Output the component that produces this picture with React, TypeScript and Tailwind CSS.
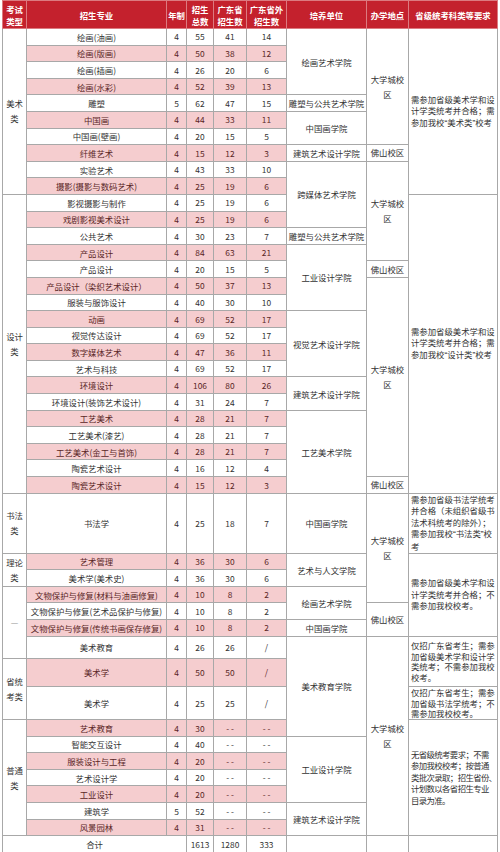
interface Span {
  lines: string[];
  span: number;
}

interface Row {
  major: string;
  years: string;
  total: string;
  gd: string;
  out: string;
  h?: string;
  cat?: Span;
  unit?: Span;
  loc?: Span;
  req?: Span;
  reqClass?: string;
}

const UCITY = ["大学城校", "区"];
const FOSHAN = ["佛山校区"];
const DASH = "- -";

const rows: Row[] = [
  {
    major: "绘画(油画)", years: "4", total: "55", gd: "41", out: "14",
    cat: { lines: ["美术", "类"], span: 10 },
    unit: { lines: ["绘画艺术学院"], span: 4 },
    loc: { lines: UCITY, span: 7 },
    req: { lines: ["需参加省级美术学和设", "计学类统考并合格；需", "参加我校“美术类”校考"], span: 10 },
  },
  { major: "绘画(版画)", years: "4", total: "50", gd: "38", out: "12" },
  { major: "绘画(插画)", years: "4", total: "26", gd: "20", out: "6" },
  { major: "绘画(水彩)", years: "4", total: "52", gd: "39", out: "13" },
  { major: "雕塑", years: "5", total: "62", gd: "47", out: "15", unit: { lines: ["雕塑与公共艺术学院"], span: 1 } },
  { major: "中国画", years: "4", total: "44", gd: "33", out: "11", unit: { lines: ["中国画学院"], span: 2 } },
  { major: "中国画(壁画)", years: "4", total: "20", gd: "15", out: "5" },
  {
    major: "纤维艺术", years: "4", total: "15", gd: "12", out: "3",
    unit: { lines: ["建筑艺术设计学院"], span: 1 },
    loc: { lines: FOSHAN, span: 1 },
  },
  {
    major: "实验艺术", years: "4", total: "43", gd: "33", out: "10",
    unit: { lines: ["跨媒体艺术学院"], span: 4 },
    loc: { lines: UCITY, span: 6 },
  },
  { major: "摄影(摄影与数码艺术)", years: "4", total: "25", gd: "19", out: "6" },
  {
    major: "影视摄影与制作", years: "4", total: "25", gd: "19", out: "6",
    cat: { lines: ["设计", "类"], span: 18 },
    req: { lines: ["需参加省级美术学和设", "计学类统考并合格；需", "参加我校“设计类”校考"], span: 18 },
  },
  { major: "戏剧影视美术设计", years: "4", total: "25", gd: "19", out: "6" },
  { major: "公共艺术", years: "4", total: "30", gd: "23", out: "7", unit: { lines: ["雕塑与公共艺术学院"], span: 1 } },
  { major: "产品设计", years: "4", total: "84", gd: "63", out: "21", unit: { lines: ["工业设计学院"], span: 4 } },
  { major: "产品设计", years: "4", total: "20", gd: "15", out: "5", loc: { lines: FOSHAN, span: 1 } },
  { major: "产品设计（染织艺术设计）", years: "4", total: "50", gd: "37", out: "13", loc: { lines: UCITY, span: 12 } },
  { major: "服装与服饰设计", years: "4", total: "40", gd: "30", out: "10" },
  { major: "动画", years: "4", total: "69", gd: "52", out: "17", unit: { lines: ["视觉艺术设计学院"], span: 4 } },
  { major: "视觉传达设计", years: "4", total: "69", gd: "52", out: "17" },
  { major: "数字媒体艺术", years: "4", total: "47", gd: "36", out: "11" },
  { major: "艺术与科技", years: "4", total: "69", gd: "52", out: "17" },
  { major: "环境设计", years: "4", total: "106", gd: "80", out: "26", unit: { lines: ["建筑艺术设计学院"], span: 2 } },
  { major: "环境设计(装饰艺术设计)", years: "4", total: "31", gd: "24", out: "7" },
  { major: "工艺美术", years: "4", total: "28", gd: "21", out: "7", unit: { lines: ["工艺美术学院"], span: 5 } },
  { major: "工艺美术(漆艺)", years: "4", total: "28", gd: "21", out: "7" },
  { major: "工艺美术(金工与首饰)", years: "4", total: "28", gd: "21", out: "7" },
  { major: "陶瓷艺术设计", years: "4", total: "16", gd: "12", out: "4" },
  { major: "陶瓷艺术设计", years: "4", total: "15", gd: "12", out: "3", loc: { lines: FOSHAN, span: 1 } },
  {
    major: "书法学", years: "4", total: "25", gd: "18", out: "7", h: "h-[59px]",
    cat: { lines: ["书法", "类"], span: 1 },
    unit: { lines: ["中国画学院"], span: 1 },
    loc: { lines: UCITY, span: 4 },
    req: {
      lines: ["需参加省级书法学统考", "并合格（未组织省级书", "法术科统考的除外）；", "需参加我校“书法类”校", "考"],
      span: 1,
    },
  },
  {
    major: "艺术管理", years: "4", total: "36", gd: "30", out: "6",
    cat: { lines: ["理论", "类"], span: 2 },
    unit: { lines: ["艺术与人文学院"], span: 2 },
    req: { lines: ["需参加省级美术学和设", "计学类统考并合格；不", "需参加我校校考。"], span: 5 },
  },
  { major: "美术学(美术史)", years: "4", total: "36", gd: "30", out: "6" },
  {
    major: "文物保护与修复(材料与油画修复)", years: "4", total: "10", gd: "8", out: "2",
    cat: { lines: ["—"], span: 4 },
    unit: { lines: ["绘画艺术学院"], span: 2 },
  },
  { major: "文物保护与修复(艺术品保护与修复)", years: "4", total: "10", gd: "8", out: "2", loc: { lines: FOSHAN, span: 2 } },
  { major: "文物保护与修复(传统书画保存修复)", years: "4", total: "10", gd: "8", out: "2", unit: { lines: ["中国画学院"], span: 1 } },
  {
    major: "美术教育", years: "4", total: "26", gd: "26", out: "/", h: "h-[22.5px]",
    unit: { lines: ["美术教育学院"], span: 4 },
    loc: { lines: UCITY, span: 10 },
    req: { lines: ["仅招广东省考生；需参", "加省级美术学和设计学", "类统考；不需参加我校", "校考。"], span: 2 },
    reqClass: "leading-[10.5px]",
  },
  {
    major: "美术学", years: "4", total: "50", gd: "50", out: "/", h: "h-[27.5px]",
    cat: { lines: ["省统", "考类"], span: 2 },
  },
  {
    major: "美术学", years: "4", total: "25", gd: "25", out: "/", h: "h-[33.5px]",
    req: { lines: ["仅招广东省考生；需参", "加省级书法学统考；不", "需参加我校校考。"], span: 1 },
    reqClass: "leading-[10.5px]",
  },
  {
    major: "艺术教育", years: "4", total: "30", gd: DASH, out: DASH,
    cat: { lines: ["普通", "类"], span: 7 },
    req: {
      lines: ["无省级统考要求；不需", "参加我校校考；按普通", "类批次录取；招生省份、", "计划数以各省招生专业", "目录为准。"],
      span: 7,
    },
    reqClass: "leading-[11.6px] tracking-[-0.6px]",
  },
  { major: "智能交互设计", years: "4", total: "40", gd: DASH, out: DASH, unit: { lines: ["工业设计学院"], span: 4 } },
  { major: "服装设计与工程", years: "4", total: "20", gd: DASH, out: DASH },
  { major: "艺术设计学", years: "4", total: "20", gd: DASH, out: DASH },
  { major: "工业设计", years: "4", total: "20", gd: DASH, out: DASH },
  { major: "建筑学", years: "5", total: "52", gd: DASH, out: DASH, unit: { lines: ["建筑艺术设计学院"], span: 2 } },
  { major: "风景园林", years: "4", total: "31", gd: DASH, out: DASH },
];

const headers: string[][] = [
  ["考试", "类型"],
  ["招生专业"],
  ["年制"],
  ["招生", "总数"],
  ["广东省", "招生数"],
  ["广东省外", "招生数"],
  ["培养单位"],
  ["办学地点"],
  ["省级统考科类等要求"],
];

const cell = "border border-[#a8a8a8] p-0 text-center align-middle";

// curly quotes are full width in the CJK font; set them in a Latin face so they stay narrow
const Line = ({ text }: { text: string }) => {
  const parts = text.split(/([“”])/);
  return (
    <div className="whitespace-nowrap">
      {parts.map((p, i) =>
        p === "“" || p === "”" ? (
          <span key={i} className="font-['Liberation_Sans']">
            {p}
          </span>
        ) : (
          p
        )
      )}
    </div>
  );
};

const Lines = ({ lines }: { lines: string[] }) => (
  <>
    {lines.map((l, i) => (
      <Line key={i} text={l} />
    ))}
  </>
);

export default function App() {
  return (
    <div className="w-[500px] bg-white pl-[2px] font-['Noto_Sans_CJK_SC',sans-serif] text-[8.4px] text-[#333]">
      <table className="w-[495px] table-fixed border-collapse">
        <colgroup>
          <col className="w-[24px]" />
          <col className="w-[140px]" />
          <col className="w-[20px]" />
          <col className="w-[27px]" />
          <col className="w-[33px]" />
          <col className="w-[40px]" />
          <col className="w-[80px]" />
          <col className="w-[42px]" />
          <col className="w-[89px]" />
        </colgroup>
        <thead>
          <tr className="h-[28px] bg-[#c4212d]">
            {headers.map((h, i) => (
              <th
                key={i}
                className="border border-[#dc7a80] p-0 text-center align-middle text-[8.4px] font-bold leading-[12px] text-white"
              >
                <Lines lines={h} />
              </th>
            ))}
          </tr>
        </thead>
        <tbody>
          {rows.map((r, i) => {
            const pink = i % 2 === 1;
            const data = pink ? "bg-[#f5cdcf] text-[#5a2626]" : "";
            return (
              <tr key={i} className={r.h ?? "h-[16.6px]"}>
                {r.cat && (
                  <td rowSpan={r.cat.span} className={`${cell} leading-[15px] ${r.cat.lines[0] === "—" ? "text-[#999]" : ""}`}>
                    <Lines lines={r.cat.lines} />
                  </td>
                )}
                <td className={`${cell} ${data} whitespace-nowrap leading-[12px]`}>{r.major}</td>
                <td className={`${cell} ${data}`}>{r.years}</td>
                <td className={`${cell} ${data}`}>{r.total}</td>
                <td className={`${cell} ${data}`}>{r.gd}</td>
                <td className={`${cell} ${data}`}>{r.out}</td>
                {r.unit && (
                  <td rowSpan={r.unit.span} className={`${cell} leading-[12px]`}>
                    <Lines lines={r.unit.lines} />
                  </td>
                )}
                {r.loc && (
                  <td rowSpan={r.loc.span} className={`${cell} leading-[15px]`}>
                    <Lines lines={r.loc.lines} />
                  </td>
                )}
                {r.req && (
                  <td
                    rowSpan={r.req.span}
                    className={`${cell} overflow-hidden pl-[2px] text-left ${r.reqClass ?? "leading-[11.6px]"}`}
                  >
                    <Lines lines={r.req.lines} />
                  </td>
                )}
              </tr>
            );
          })}
          <tr className="h-[16.6px]">
            <td colSpan={3} className={cell}>
              合计
            </td>
            <td className={cell}>1613</td>
            <td className={cell}>1280</td>
            <td className={cell}>333</td>
            <td className={cell}></td>
            <td className={cell}></td>
            <td className={cell}></td>
          </tr>
        </tbody>
      </table>
    </div>
  );
}
